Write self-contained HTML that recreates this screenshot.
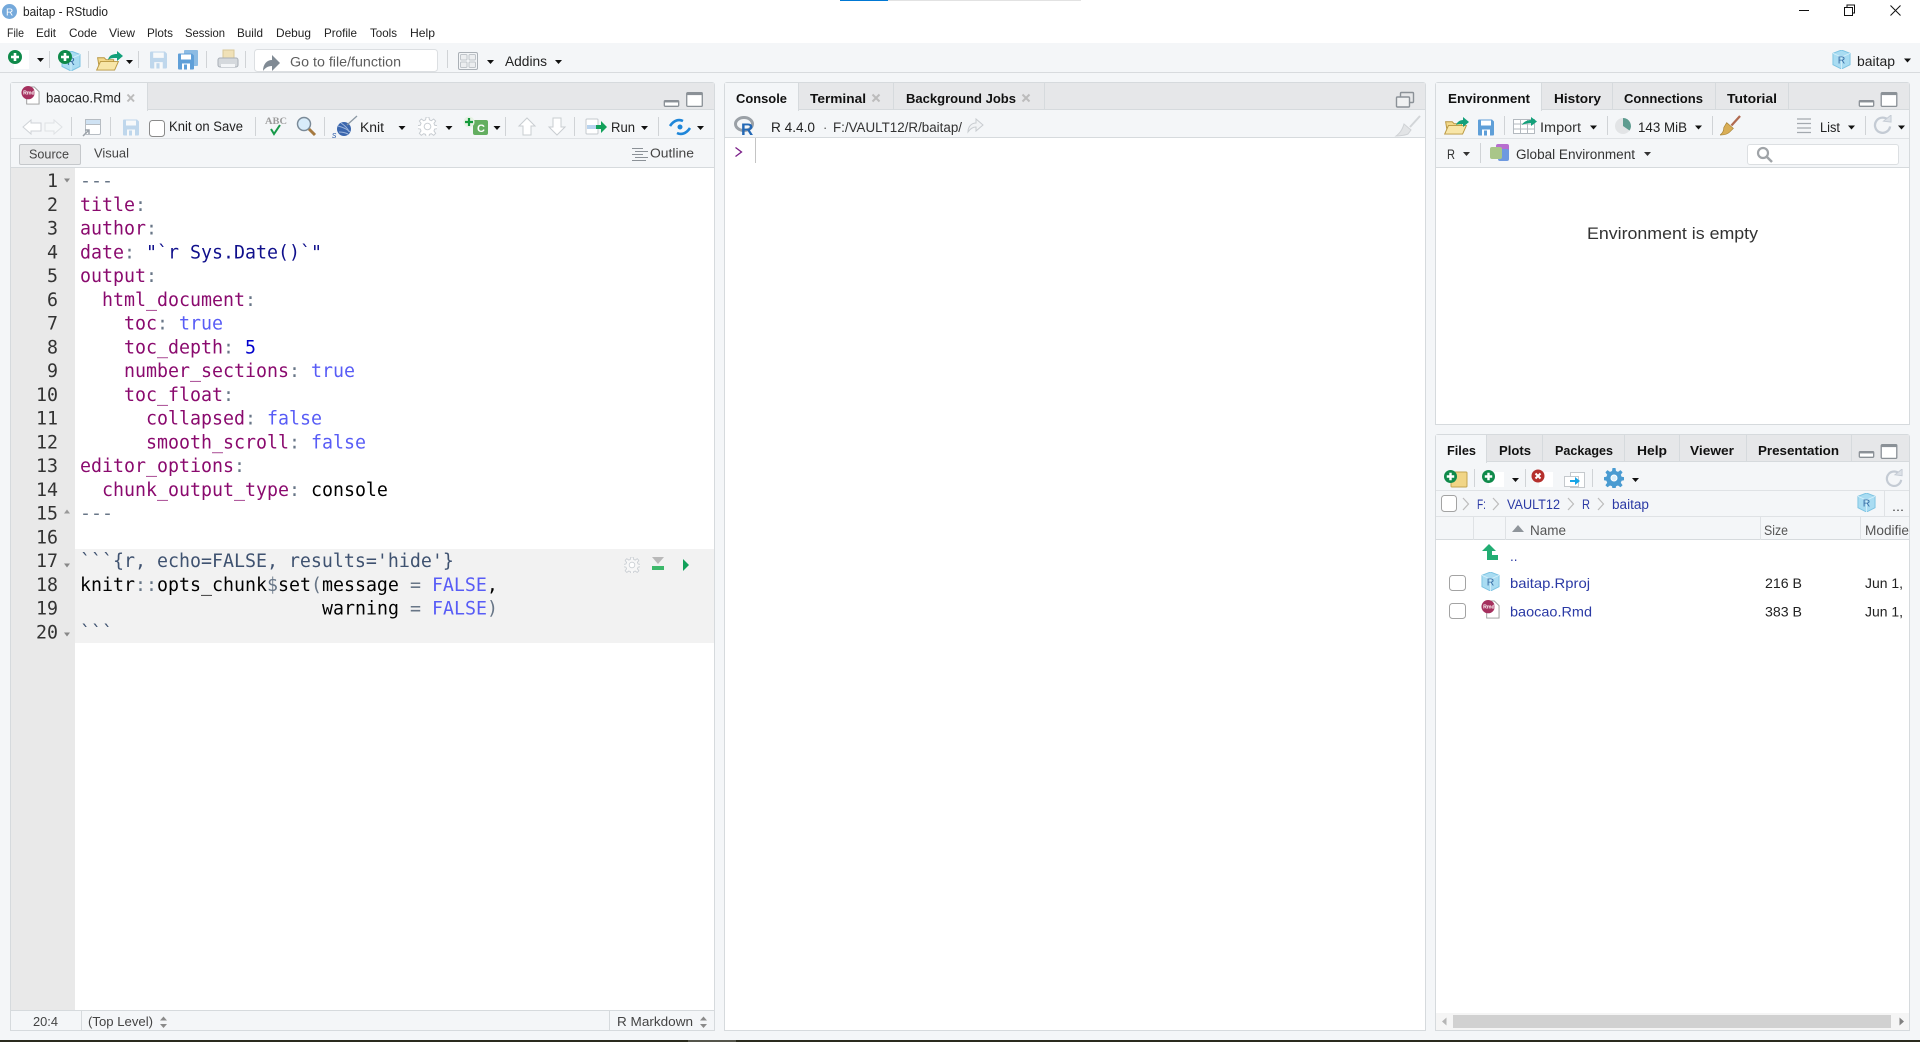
<!DOCTYPE html>
<html><head><meta charset="utf-8"><title>baitap - RStudio</title>
<style>
html,body{margin:0;padding:0;width:1920px;height:1042px;overflow:hidden;background:#f4f6f8}
.a{position:absolute;box-sizing:border-box}
svg{position:absolute;left:0;top:0}
text{font-family:"Liberation Sans",sans-serif;font-size:13px;fill:#222}
.b{font-weight:bold;fill:#111;font-size:13px}
.l{fill:#2b3aa5}
.m{font-family:"DejaVu Sans Mono",monospace;font-size:18.27px;white-space:pre}
.n{fill:#333;text-anchor:end}
.k{fill:#8a0a6e}.p{fill:#687687}.s{fill:#10108c}.t{fill:#585cf6}.d{fill:#0000cd}.h{fill:#3f5270}.x{fill:#000}
</style></head>
<body>
<div class="a" style="left:0;top:0;width:1920px;height:43px;background:#fff"></div>
<div class="a" style="left:840px;top:0;width:241px;height:1px;background:#e2e2e2"></div>
<div class="a" style="left:840px;top:0;width:48px;height:1px;background:#0078d4"></div>
<div class="a" style="left:0;top:72px;width:1920px;height:1px;background:#d8dbde"></div>
<!-- panes -->
<div class="a" style="left:10px;top:82px;width:705px;height:949px;background:#fff;border:1px solid #d6dadd;border-radius:3px 3px 0 0"></div>
<div class="a" style="left:11px;top:83px;width:703px;height:27px;background:#e6e7e9;border-bottom:1px solid #d6dadd"></div>
<div class="a" style="left:11px;top:110px;width:703px;height:58px;background:#f4f6f8;border-bottom:1px solid #d6dadd"></div>
<div class="a" style="left:11px;top:138px;width:703px;height:1px;background:#dfe2e5"></div>
<div class="a" style="left:11px;top:83px;width:137px;height:28px;background:#f4f6f8;border-right:1px solid #d6dadd"></div>
<div class="a" style="left:11px;top:168px;width:64px;height:842px;background:#e9e9e9"></div>
<div class="a" style="left:75px;top:549px;width:639px;height:94px;background:#f2f2f2"></div>
<div class="a" style="left:11px;top:1010px;width:703px;height:20px;background:#f4f6f8;border-top:1px solid #d6dadd"></div>
<div class="a" style="left:81px;top:1010px;width:1px;height:20px;background:#d6dadd"></div>
<div class="a" style="left:609px;top:1010px;width:1px;height:20px;background:#d6dadd"></div>
<div class="a" style="left:19px;top:144px;width:62px;height:21px;background:#e8e9ea;border:1px solid #c5c8cb;border-radius:2px"></div>

<div class="a" style="left:724px;top:82px;width:702px;height:949px;background:#fff;border:1px solid #d6dadd;border-radius:3px 3px 0 0"></div>
<div class="a" style="left:725px;top:83px;width:700px;height:27px;background:#e6e7e9;border-bottom:1px solid #d6dadd"></div>
<div class="a" style="left:725px;top:110px;width:700px;height:28px;background:#f4f6f8;border-bottom:1px solid #d6dadd"></div>
<div class="a" style="left:725px;top:83px;width:74px;height:28px;background:#f4f6f8;border-right:1px solid #d6dadd"></div>
<div class="a" style="left:893px;top:83px;width:1px;height:27px;background:#d6dadd"></div>
<div class="a" style="left:1044px;top:83px;width:1px;height:27px;background:#d6dadd"></div>
<div class="a" style="left:755px;top:138px;width:1px;height:25px;background:#c4c4c4"></div>

<div class="a" style="left:1435px;top:82px;width:475px;height:343px;background:#fff;border:1px solid #d6dadd;border-radius:3px 3px 0 0"></div>
<div class="a" style="left:1436px;top:83px;width:473px;height:27px;background:#e6e7e9;border-bottom:1px solid #d6dadd"></div>
<div class="a" style="left:1436px;top:110px;width:473px;height:58px;background:#f4f6f8;border-bottom:1px solid #d6dadd"></div>
<div class="a" style="left:1436px;top:138px;width:473px;height:1px;background:#dfe2e5"></div>
<div class="a" style="left:1436px;top:83px;width:106px;height:28px;background:#f4f6f8;border-right:1px solid #d6dadd"></div>
<div class="a" style="left:1612px;top:83px;width:1px;height:27px;background:#d6dadd"></div>
<div class="a" style="left:1715px;top:83px;width:1px;height:27px;background:#d6dadd"></div>
<div class="a" style="left:1788px;top:83px;width:1px;height:27px;background:#d6dadd"></div>
<div class="a" style="left:1747px;top:144px;width:152px;height:21px;background:#fff;border:1px solid #dcdfe2;border-radius:3px"></div>

<div class="a" style="left:1435px;top:434px;width:475px;height:597px;background:#fff;border:1px solid #d6dadd;border-radius:3px 3px 0 0"></div>
<div class="a" style="left:1436px;top:435px;width:473px;height:27px;background:#e6e7e9;border-bottom:1px solid #d6dadd"></div>
<div class="a" style="left:1436px;top:462px;width:473px;height:78px;background:#f4f6f8;border-bottom:1px solid #d6dadd"></div>
<div class="a" style="left:1436px;top:490px;width:473px;height:1px;background:#dfe2e5"></div>
<div class="a" style="left:1436px;top:516px;width:473px;height:1px;background:#dfe2e5"></div>
<div class="a" style="left:1436px;top:435px;width:51px;height:28px;background:#f4f6f8;border-right:1px solid #d6dadd"></div>
<div class="a" style="left:1542px;top:435px;width:1px;height:27px;background:#d6dadd"></div>
<div class="a" style="left:1624px;top:435px;width:1px;height:27px;background:#d6dadd"></div>
<div class="a" style="left:1679px;top:435px;width:1px;height:27px;background:#d6dadd"></div>
<div class="a" style="left:1746px;top:435px;width:1px;height:27px;background:#d6dadd"></div>
<div class="a" style="left:1851px;top:435px;width:1px;height:27px;background:#d6dadd"></div>
<div class="a" style="left:1473px;top:517px;width:1px;height:23px;background:#dfe2e5"></div>
<div class="a" style="left:1505px;top:517px;width:1px;height:23px;background:#dfe2e5"></div>
<div class="a" style="left:1760px;top:517px;width:1px;height:23px;background:#dfe2e5"></div>
<div class="a" style="left:1860px;top:517px;width:1px;height:23px;background:#dfe2e5"></div>
<div class="a" style="left:1884px;top:491px;width:1px;height:25px;background:#dfe2e5"></div>
<div class="a" style="left:1436px;top:1013px;width:473px;height:17px;background:#f5f5f5"></div>
<div class="a" style="left:1453px;top:1015px;width:438px;height:13px;background:#d1d1d1"></div>
<div class="a" style="left:0;top:1040px;width:1920px;height:2px;background:#2a2b1e"></div>
<div class="a" style="left:688px;top:1040px;width:48px;height:2px;background:#55564c"></div>

<svg width="1920" height="1042" viewBox="0 0 1920 1042" xmlns="http://www.w3.org/2000/svg">
<defs>
<symbol id="save" viewBox="0 0 16 16"><path d="M0 1a1 1 0 0 1 1-1h13l2 2v13a1 1 0 0 1-1 1H1a1 1 0 0 1-1-1z" fill="#5f9fd8"/><rect x="3" y="1" width="10" height="5" fill="#fff"/><rect x="4" y="10" width="8" height="6" fill="#fff"/><rect x="6" y="11" width="3" height="5" fill="#5f9fd8"/></symbol>
<symbol id="cube" viewBox="0 0 20 20"><path d="M10 0l9 3.500v12l-9 4.500-9-4.500v-12z" fill="#a9dcf2" stroke="#7cc3e2"/><path d="M1 3.500l9 4 9-4M10 7.500V20" fill="none" stroke="#d3eefa"/><text x="6" y="14" style="font-size:11px;fill:#3a6ea5">R</text></symbol>
<symbol id="rmd" viewBox="0 0 20 20"><path d="M6 1h8l5 5v13H6z" fill="#fff" stroke="#9a9a9a"/><circle cx="7.500" cy="7" r="7" fill="#a5305e"/><text x="2.200" y="9" style="font-size:5.500px;fill:#fff;font-weight:bold">Rmd</text></symbol>
<symbol id="gear" viewBox="0 0 20 20"><path d="M8.500 0h3l.5 3 2 .9 2.500-1.800 2.100 2.100-1.800 2.500.8 2 2.900.5v3l-2.900.5-.8 2 1.800 2.500-2.100 2.100-2.500-1.800-2 .8-.5 2.900h-3l-.5-2.900-2-.8-2.500 1.800-2.100-2.100 1.800-2.500-.8-2-2.900-.5v-3l2.900-.5.8-2-1.800-2.500 2.100-2.100 2.500 1.800 2-.9z"/><circle cx="10" cy="10" r="3.500" fill="#fff"/></symbol>
<symbol id="folder" viewBox="0 0 24 18"><path d="M1 4h7l2 2h8v10H3z" fill="#f3d98b" stroke="#b8963f"/><path d="M0 17L4 8h19l-4 9z" fill="#f8e6a8" stroke="#b8963f"/></symbol>
<symbol id="refresh" viewBox="0 0 20 20"><path d="M16.500 6A8 8 0 1 0 18 12" fill="none" stroke="#c4cbd4" stroke-width="2.400"/><path d="M11 6.500l8 1V0z" fill="#dce1e7" stroke="#c4cbd4"/></symbol>
<symbol id="minp" viewBox="0 0 18 8"><rect x=".8" y=".8" width="16.400" height="6.400" rx="1" fill="#fff" stroke="#8b9197" stroke-width="1.500"/><rect x=".8" y=".8" width="16.400" height="2" fill="#8b9197"/></symbol>
<symbol id="maxp" viewBox="0 0 18 16"><rect x=".7" y=".7" width="16.600" height="14.600" rx="1" fill="#fff" stroke="#8b9197" stroke-width="1.400"/><rect x=".7" y=".7" width="16.600" height="2.600" fill="#8b9197"/></symbol>
<symbol id="plus" viewBox="0 0 14 14"><circle cx="7" cy="7" r="7" fill="#0f8a4a"/><path d="M7 3v8M3 7h8" stroke="#fff" stroke-width="2.600"/></symbol>
<symbol id="broom" viewBox="0 0 22 22"><path d="M21 1L12 11" stroke="#b06a50" stroke-width="2.400"/><path d="M7 8l7 6-4 4c-2 2-6 3-10 3 3-2 4-5 4-8z" fill="#d9ae55" stroke="#a58238" stroke-width=".7"/></symbol>
</defs>

<!-- title bar -->
<circle cx="9.500" cy="11.500" r="7.500" fill="#75a9db"/><text x="6" y="15.500" style="font-size:10px;fill:#fff">R</text>
<text x="23" y="16" textLength="85" lengthAdjust="spacingAndGlyphs" style="font-size:12.500px">baitap - RStudio</text>
<path d="M1799 10.500h10" stroke="#111" fill="none"/>
<path d="M1844.500 7.500h8v8h-8zM1847 7.500v-2.500h7.500v8h-2" stroke="#111" fill="none"/>
<path d="M1890.500 5.500l10 10M1900.500 5.500l-10 10" stroke="#111" fill="none"/>
<g style="font-size:12px">
<text x="7" y="37" textLength="17" lengthAdjust="spacingAndGlyphs" style="font-size:12px">File</text>
<text x="36" y="37" textLength="20" lengthAdjust="spacingAndGlyphs" style="font-size:12px">Edit</text>
<text x="69" y="37" textLength="28" lengthAdjust="spacingAndGlyphs" style="font-size:12px">Code</text>
<text x="109" y="37" textLength="26" lengthAdjust="spacingAndGlyphs" style="font-size:12px">View</text>
<text x="147" y="37" textLength="26" lengthAdjust="spacingAndGlyphs" style="font-size:12px">Plots</text>
<text x="185" y="37" textLength="40" lengthAdjust="spacingAndGlyphs" style="font-size:12px">Session</text>
<text x="237" y="37" textLength="26" lengthAdjust="spacingAndGlyphs" style="font-size:12px">Build</text>
<text x="276" y="37" textLength="35" lengthAdjust="spacingAndGlyphs" style="font-size:12px">Debug</text>
<text x="324" y="37" textLength="33" lengthAdjust="spacingAndGlyphs" style="font-size:12px">Profile</text>
<text x="370" y="37" textLength="27" lengthAdjust="spacingAndGlyphs" style="font-size:12px">Tools</text>
<text x="410" y="37" textLength="25" lengthAdjust="spacingAndGlyphs" style="font-size:12px">Help</text>
</g>

<!-- main toolbar -->
<rect x="14" y="50" width="15" height="19" fill="#fff"/>
<use href="#plus" x="8" y="50" width="14" height="14"/>
<path d="M37 58h7l-3.500 4z" fill="#111"/>
<path d="M49.500 51v17M88.500 51v17M138.500 51v17M206.500 51v17M245.500 51v17M447.500 50v18" stroke="#d0d3d6" fill="none"/>
<use href="#cube" x="61" y="51" width="20" height="20"/>
<use href="#plus" x="58" y="50" width="14" height="14"/>
<use href="#folder" x="96" y="54" width="24" height="17"/>
<path d="M108 60c1-5 5-6 9-6v-3l6 5-6 5v-3c-4 0-7 0-9 2z" fill="#13a07a"/>
<path d="M126 60h7l-3.500 4z" fill="#111"/>
<use href="#save" x="150" y="51" width="17" height="18" opacity=".35"/>
<rect x="184" y="50" width="14" height="16" rx="1" fill="#8cbbe3"/>
<use href="#save" x="178" y="53" width="16" height="17"/>
<rect x="223" y="50" width="11" height="9" fill="#f0dfb0" stroke="#d6c48f" opacity=".9"/>
<rect x="218" y="58" width="20" height="9" rx="2" fill="#d5d9dd" stroke="#a9afb6"/>
<rect x="221" y="64" width="14" height="3" fill="#f4f6f8"/>
<rect x="254.500" y="49.500" width="183" height="22" rx="3" fill="#fff" stroke="#dcdfe2"/>
<path d="M263 71c0-7 4-11 9-11v-5l8 8-8 8v-5c-4 0-7 2-9 5z" fill="#808a94"/>
<text x="290" y="66.500" textLength="111" lengthAdjust="spacingAndGlyphs" style="fill:#5c5c5c;font-size:13.500px">Go to file/function</text>
<rect x="458.500" y="52.500" width="19" height="17" rx="1.500" fill="#f4f6f8" stroke="#aab0b6"/>
<rect x="460.500" y="54.500" width="6.500" height="5.500" rx="1" fill="#eceef0" stroke="#c0c5ca"/>
<rect x="469" y="54.500" width="6.500" height="5.500" rx="1" fill="#eceef0" stroke="#c0c5ca"/>
<rect x="460.500" y="62" width="6.500" height="5.500" rx="1" fill="#eceef0" stroke="#c0c5ca"/>
<rect x="469" y="62" width="6.500" height="5.500" rx="1" fill="#eceef0" stroke="#c0c5ca"/>
<path d="M487 60h7l-3.500 4z" fill="#111"/>
<text x="505" y="66" textLength="42" lengthAdjust="spacingAndGlyphs" style="font-size:13.500px">Addins</text>
<path d="M555 60h7l-3.500 4z" fill="#111"/>
<use href="#cube" x="1832" y="50" width="19" height="19"/>
<text x="1857" y="66" textLength="38" lengthAdjust="spacingAndGlyphs" style="font-size:13.500px">baitap</text>
<path d="M1904 58.500h7l-3.500 4z" fill="#111"/>

<!-- editor tab -->
<use href="#rmd" x="21" y="86" width="19" height="19"/>
<text x="46" y="102.500" textLength="75" lengthAdjust="spacingAndGlyphs" style="font-size:13.500px">baocao.Rmd</text>
<path d="M127.500 94.500l6.500 7M134 94.500l-6.500 7" stroke="#bcbcbc" stroke-width="2"/>
<use href="#minp" x="663" y="100" width="17" height="7"/>
<use href="#maxp" x="686" y="92" width="17" height="15"/>

<!-- editor toolbar -->
<path d="M23 127l8-7v3h10v8h-10v3z" fill="#fff" stroke="#cfd3d7"/>
<path d="M62 127l-8-7v3h-9v8h9v3z" fill="#f6f8f9" stroke="#dfe2e5"/>
<path d="M71.500 117v19M110.500 117v19M255.500 117v19M324.500 117v19M505.500 117v19M574.500 117v19M658.500 117v19" stroke="#d0d3d6" fill="none"/>
<rect x="85.500" y="119.500" width="15" height="15" rx="1.500" fill="#fff" stroke="#b7bdc3"/>
<rect x="85.500" y="119.500" width="15" height="5" fill="#cfe2f3" stroke="#b7bdc3"/>
<path d="M83 136l6-6M89 134v-4h-4" stroke="#9aa1a8" fill="none" stroke-width="1.500"/>
<use href="#save" x="123" y="119" width="16" height="17" opacity=".35"/>
<rect x="149.500" y="120.500" width="15" height="16" rx="3" fill="#fff" stroke="#8a8a8a"/>
<text x="169" y="131" textLength="74" lengthAdjust="spacingAndGlyphs" style="font-size:13.500px">Knit on Save</text>
<text x="265" y="124" textLength="22" lengthAdjust="spacingAndGlyphs" style="font-size:9px;font-family:'Liberation Serif',serif;font-weight:bold;fill:#9c9c9c">ABC</text>
<path d="M271 129l3 5 6-9" fill="none" stroke="#189a4a" stroke-width="2"/>
<circle cx="304" cy="124" r="6.500" fill="#d8ecfa" stroke="#7a8a98" stroke-width="1.500"/>
<path d="M309 129l6 6" stroke="#a5793f" stroke-width="3"/>
<circle cx="344" cy="129" r="7" fill="#3a66ad"/>
<path d="M338 126c4 1 9 3 12 6M339 132c3 0 7 1 9 2M341 123c3 2 7 5 8 9" stroke="#9db6dd" fill="none"/>
<path d="M347 125l10-9" stroke="#8a97a3" stroke-width="1.300"/>
<text x="332" y="138" style="font-size:9px;font-style:italic;fill:#3a66ad">s</text>
<text x="360" y="132" textLength="24" lengthAdjust="spacingAndGlyphs" style="font-size:13.500px">Knit</text>
<path d="M398.500 126h7l-3.500 4z" fill="#111"/>
<use href="#gear" x="418" y="117" width="19" height="19" stroke="#c7ccd1" fill="#fff"/>
<path d="M445.500 126h7l-3.500 4z" fill="#111"/>
<rect x="473" y="120" width="15" height="15" rx="2" fill="#63ae60"/>
<text x="477" y="132" style="font-size:11px;fill:#fff;font-weight:bold">C</text>
<circle cx="469" cy="122" r="5.500" fill="#e6f2e4"/>
<path d="M469 118v8M465 122h8" stroke="#139a3b" stroke-width="2.200"/>
<path d="M493.500 126h7l-3.500 4z" fill="#111"/>
<path d="M527 118l8 8h-4v9h-8v-9h-4z" fill="#fff" stroke="#c9cdd1"/>
<path d="M557 135l8-8h-4v-9h-8v9h-4z" fill="#fff" stroke="#c9cdd1"/>
<rect x="586" y="119" width="12" height="15" rx="1" fill="#fff" stroke="#c4c9ce"/>
<rect x="587" y="125" width="10" height="4" fill="#b8d3ee"/>
<path d="M596 125h5v-4l6 6-6 6v-4h-5z" fill="#12a15a"/>
<text x="611" y="132" textLength="24" lengthAdjust="spacingAndGlyphs" style="font-size:13.500px">Run</text>
<path d="M641 126h7l-3.500 4z" fill="#111"/>
<path d="M670 126c4-6 9-7 13-5M690 128c-4 6-9 7-13 5" fill="none" stroke="#1f86d9" stroke-width="2.600"/>
<circle cx="680" cy="127" r="2.500" fill="#1f86d9"/>
<path d="M697 126h7l-3.500 4z" fill="#111"/>
<text x="29" y="158.500" textLength="40" lengthAdjust="spacingAndGlyphs" style="font-size:13px;fill:#444">Source</text>
<text x="94" y="157.500" textLength="35" lengthAdjust="spacingAndGlyphs" style="font-size:13px;fill:#444">Visual</text>
<path d="M632 148.500h11M635 151.500h13M632 154.500h11M635 157.500h13M632 160.500h14" stroke="#8b9197" fill="none"/>
<text x="650" y="157.500" textLength="44" lengthAdjust="spacingAndGlyphs" style="font-size:13px;fill:#444">Outline</text>

<!-- gutter and code -->
<g transform="translate(0,-0.5)">
<text class="m n" x="58" y="187.500">1</text><text class="m n" x="58" y="211.300">2</text><text class="m n" x="58" y="235">3</text><text class="m n" x="58" y="258.800">4</text><text class="m n" x="58" y="282.500">5</text><text class="m n" x="58" y="306.300">6</text><text class="m n" x="58" y="330">7</text><text class="m n" x="58" y="353.800">8</text><text class="m n" x="58" y="377.500">9</text><text class="m n" x="58" y="401.300">10</text><text class="m n" x="58" y="425">11</text><text class="m n" x="58" y="448.800">12</text><text class="m n" x="58" y="472.500">13</text><text class="m n" x="58" y="496.300">14</text><text class="m n" x="58" y="520">15</text><text class="m n" x="58" y="543.800">16</text><text class="m n" x="58" y="567.500">17</text><text class="m n" x="58" y="591.300">18</text><text class="m n" x="58" y="615">19</text><text class="m n" x="58" y="638.800">20</text>
<path d="M64 179h6l-3 4zM64 564h6l-3 4zM64 633h6l-3 4z" fill="#888"/>
<path d="M64 514h6l-3-4z" fill="#999"/>
<text class="m p" x="80" y="187.500">---</text>
<text class="m" x="80" y="211.300"><tspan class="k">title</tspan><tspan class="p">:</tspan></text>
<text class="m" x="80" y="235"><tspan class="k">author</tspan><tspan class="p">:</tspan></text>
<text class="m" x="80" y="258.800"><tspan class="k">date</tspan><tspan class="p">: </tspan><tspan class="s">"&#96;r Sys.Date()&#96;"</tspan></text>
<text class="m" x="80" y="282.500"><tspan class="k">output</tspan><tspan class="p">:</tspan></text>
<text class="m" x="102" y="306.300"><tspan class="k">html_document</tspan><tspan class="p">:</tspan></text>
<text class="m" x="124" y="330"><tspan class="k">toc</tspan><tspan class="p">: </tspan><tspan class="t">true</tspan></text>
<text class="m" x="124" y="353.800"><tspan class="k">toc_depth</tspan><tspan class="p">: </tspan><tspan class="d">5</tspan></text>
<text class="m" x="124" y="377.500"><tspan class="k">number_sections</tspan><tspan class="p">: </tspan><tspan class="t">true</tspan></text>
<text class="m" x="124" y="401.300"><tspan class="k">toc_float</tspan><tspan class="p">:</tspan></text>
<text class="m" x="146" y="425"><tspan class="k">collapsed</tspan><tspan class="p">: </tspan><tspan class="t">false</tspan></text>
<text class="m" x="146" y="448.800"><tspan class="k">smooth_scroll</tspan><tspan class="p">: </tspan><tspan class="t">false</tspan></text>
<text class="m" x="80" y="472.500"><tspan class="k">editor_options</tspan><tspan class="p">:</tspan></text>
<text class="m" x="102" y="496.300"><tspan class="k">chunk_output_type</tspan><tspan class="p">: </tspan><tspan class="x">console</tspan></text>
<text class="m p" x="80" y="520">---</text>
<text class="m h" x="80" y="567.500">&#96;&#96;&#96;{r, echo=FALSE, results='hide'}</text>
<text class="m" x="80" y="591.300"><tspan class="x">knitr</tspan><tspan class="p">::</tspan><tspan class="x">opts_chunk</tspan><tspan class="p">$</tspan><tspan class="x">set</tspan><tspan class="p">(</tspan><tspan class="x">message </tspan><tspan class="p">= </tspan><tspan class="t">FALSE</tspan><tspan class="x">,</tspan></text>
<text class="m" x="322" y="615"><tspan class="x">warning </tspan><tspan class="p">= </tspan><tspan class="t">FALSE</tspan><tspan class="p">)</tspan></text>
<text class="m h" x="80" y="638.800">&#96;&#96;&#96;</text>
</g>
<use href="#gear" x="624" y="557" width="16" height="16" stroke="#c7ccd1" fill="#f7f7f7"/>
<path d="M652 557h12l-6 7z" fill="#b9b9b9"/><rect x="652" y="566" width="12" height="4" fill="#3cb86a"/>
<path d="M683 559l6 6-6 6z" fill="#11a05a"/>

<!-- status -->
<text x="33" y="1026" textLength="25" lengthAdjust="spacingAndGlyphs" style="font-size:13px;fill:#444">20:4</text>
<text x="88" y="1026" textLength="65" lengthAdjust="spacingAndGlyphs" style="font-size:13px;fill:#444">(Top Level)</text>
<path d="M160 1020.500h7l-3.500-4zM160 1024h7l-3.500 4z" fill="#8a8a8a"/>
<text x="617" y="1026" textLength="76" lengthAdjust="spacingAndGlyphs" style="font-size:13px;fill:#444">R Markdown</text>
<path d="M700 1020.500h7l-3.500-4zM700 1024h7l-3.500 4z" fill="#8a8a8a"/>

<!-- console -->
<text x="736" y="103" textLength="51" lengthAdjust="spacingAndGlyphs" class="b">Console</text>
<text x="810" y="103" textLength="56" lengthAdjust="spacingAndGlyphs" class="b">Terminal</text>
<path d="M872.500 94.500l7 7M879.500 94.500l-7 7" stroke="#bcbcbc" stroke-width="2"/>
<text x="906" y="103" textLength="110" lengthAdjust="spacingAndGlyphs" class="b">Background Jobs</text>
<path d="M1022.500 94.500l7 7M1029.500 94.500l-7 7" stroke="#bcbcbc" stroke-width="2"/>
<rect x="1400.500" y="92.500" width="13" height="10" rx="1" fill="none" stroke="#8b9197" stroke-width="1.400"/>
<rect x="1396.500" y="97" width="13" height="10" rx="1" fill="#f0f1f2" stroke="#8b9197" stroke-width="1.400"/>
<ellipse cx="744" cy="124" rx="8.500" ry="6.500" fill="none" stroke="#9aa0a6" stroke-width="3"/>
<text x="741" y="135" style="font-size:17px;font-weight:bold;fill:#2368b5">R</text>
<text x="771" y="132" textLength="44" lengthAdjust="spacingAndGlyphs" style="font-size:13.500px">R 4.4.0</text>
<text x="823" y="132" style="font-size:13px;fill:#555">·</text>
<text x="833" y="132" textLength="129" lengthAdjust="spacingAndGlyphs" style="font-size:13.500px;fill:#333">F:/VAULT12/R/baitap/</text>
<path d="M968 132c0-6 4-9 8-9v-4l7 6-7 6v-4c-3 0-6 2-8 5z" fill="#f1f3f5" stroke="#c8ccd0"/>
<path d="M1420 116l-10 11" stroke="#d2d5d8" stroke-width="2"/><path d="M1404 124l7 6-3 4c-2 1-8 2-12 2 3-2 6-5 8-12z" fill="#e2e4e6" stroke="#cfd2d5"/>
<path d="M735.500 147.500l6 4.500-6 4.500" fill="none" stroke="#7a1e88" stroke-width="1.300"/>

<!-- environment -->
<text x="1448" y="103" textLength="82" lengthAdjust="spacingAndGlyphs" class="b">Environment</text>
<text x="1554" y="103" textLength="47" lengthAdjust="spacingAndGlyphs" class="b">History</text>
<text x="1624" y="103" textLength="79" lengthAdjust="spacingAndGlyphs" class="b">Connections</text>
<text x="1727" y="103" textLength="50" lengthAdjust="spacingAndGlyphs" class="b">Tutorial</text>
<use href="#minp" x="1858" y="100" width="17" height="7"/>
<use href="#maxp" x="1880" y="92" width="18" height="15"/>
<use href="#folder" x="1444" y="118" width="24" height="17"/>
<path d="M1456 125c1-3 4-5 7-5v-3l6 5-6 5v-3c-3 0-5 0-7 1z" fill="#13a07a"/>
<use href="#save" x="1478" y="119" width="16" height="17"/>
<path d="M1504.500 116v19M1607.500 116v19M1712.500 116v19M1865.500 116v19" stroke="#d0d3d6" fill="none"/>
<rect x="1513.500" y="119.500" width="21" height="14" fill="#fff" stroke="#b3b9bf"/>
<path d="M1513.500 124h21M1513.500 129h21M1520.500 119.500v14M1527.500 119.500v14" stroke="#b3b9bf"/>
<path d="M1522 125c1-3 5-5 9-5v-3l6 4.500-6 4.500v-3c-4 0-7 1-9 2z" fill="#13a07a"/>
<text x="1540" y="132" textLength="41" lengthAdjust="spacingAndGlyphs" style="font-size:13.500px;fill:#333">Import</text>
<path d="M1590 125.500h7l-3.500 4z" fill="#111"/>
<circle cx="1623" cy="126" r="8" fill="#e2e4e6"/><path d="M1623 126v-8a8 8 0 0 1 6.500 12.500z" fill="#5e9c90"/>
<text x="1638" y="132" textLength="49" lengthAdjust="spacingAndGlyphs" style="font-size:13.500px">143 MiB</text>
<path d="M1695 125.500h7l-3.500 4z" fill="#111"/>
<use href="#broom" x="1720" y="115" width="21" height="21"/>
<path d="M1797 119h14M1797 123.500h14M1797 128h14M1797 132.500h14" stroke="#a3a9af" stroke-width="1.200" fill="none"/>
<text x="1820" y="132" textLength="20" lengthAdjust="spacingAndGlyphs" style="font-size:13.500px">List</text>
<path d="M1848 125.500h7l-3.500 4z" fill="#111"/>
<use href="#refresh" x="1873" y="115" width="19" height="19"/>
<path d="M1898 125.500h7l-3.500 4z" fill="#111"/>
<text x="1447" y="159" textLength="8" lengthAdjust="spacingAndGlyphs" style="font-size:13.500px;fill:#333">R</text>
<path d="M1463 152h7l-3.500 4z" fill="#333"/>
<path d="M1480.500 143v20" stroke="#d0d3d6"/>
<rect x="1496" y="144" width="13" height="13" rx="2" fill="#b86ed0"/>
<rect x="1498" y="149" width="11" height="12" rx="2" fill="#6e99e0"/>
<rect x="1490" y="147" width="12" height="12" rx="2" fill="#a9c689"/>
<text x="1516" y="159" textLength="119" lengthAdjust="spacingAndGlyphs" style="font-size:13.500px;fill:#333">Global Environment</text>
<path d="M1644 152h7l-3.500 4z" fill="#333"/>
<circle cx="1763" cy="153" r="5" fill="none" stroke="#a0a4a8" stroke-width="2.200"/>
<path d="M1767 157l5 5" stroke="#a0a4a8" stroke-width="2.500"/>
<text x="1587" y="239" textLength="171" lengthAdjust="spacingAndGlyphs" style="font-size:17px;fill:#333">Environment is empty</text>

<!-- files -->
<text x="1447" y="455" textLength="29" lengthAdjust="spacingAndGlyphs" class="b">Files</text>
<text x="1499" y="455" textLength="32" lengthAdjust="spacingAndGlyphs" class="b">Plots</text>
<text x="1555" y="455" textLength="58" lengthAdjust="spacingAndGlyphs" class="b">Packages</text>
<text x="1637" y="455" textLength="30" lengthAdjust="spacingAndGlyphs" class="b">Help</text>
<text x="1690" y="455" textLength="44" lengthAdjust="spacingAndGlyphs" class="b">Viewer</text>
<text x="1758" y="455" textLength="81" lengthAdjust="spacingAndGlyphs" class="b">Presentation</text>
<use href="#minp" x="1858" y="451" width="17" height="7"/>
<use href="#maxp" x="1880" y="444" width="18" height="15"/>
<rect x="1451" y="472" width="16" height="15" rx="1" fill="#f1d586" stroke="#c2a44f"/>
<use href="#plus" x="1444" y="470" width="13" height="13"/>
<path d="M1474.500 469v18M1525.500 469v18M1592.500 469v18" stroke="#d0d3d6"/>
<rect x="1489" y="472" width="15" height="15" fill="#fff"/>
<use href="#plus" x="1482" y="470" width="13" height="13"/>
<path d="M1512 478h7l-3.500 4z" fill="#111"/>
<rect x="1539" y="472" width="14" height="15" fill="#fff"/>
<circle cx="1538" cy="476" r="6.500" fill="#b5302d"/><path d="M1535.500 473.500l5 5M1540.500 473.500l-5 5" stroke="#fff" stroke-width="2"/>
<rect x="1570.500" y="472.500" width="14" height="15" fill="#fff" stroke="#c5c9cd"/>
<rect x="1564.500" y="476.500" width="14" height="10" fill="#fff" stroke="#c5c9cd"/>
<path d="M1570 480h5v-3l5 4-5 4v-3h-5z" fill="#17a4e6"/>
<use href="#gear" x="1604" y="468" width="20" height="20" fill="#4a9bd1"/>
<circle cx="1614" cy="478" r="2.500" fill="#dbeef9"/>
<path d="M1632 478h7l-3.500 4z" fill="#111"/>
<use href="#refresh" x="1885" y="469" width="18" height="18"/>
<rect x="1441.500" y="495.500" width="15" height="16" rx="3" fill="#fff" stroke="#a3a3a3"/>
<path d="M1463 498l5.500 6-5.500 6M1493 498l5.500 6-5.500 6M1568 498l5.500 6-5.500 6M1598 498l5.500 6-5.500 6" fill="none" stroke="#bcbcbc" stroke-width="1.200"/>
<text x="1477" y="509" textLength="9" lengthAdjust="spacingAndGlyphs" class="l" style="font-size:13.500px">F:</text>
<text x="1507" y="509" textLength="53" lengthAdjust="spacingAndGlyphs" class="l" style="font-size:13.500px">VAULT12</text>
<text x="1582" y="509" textLength="8" lengthAdjust="spacingAndGlyphs" class="l" style="font-size:13.500px">R</text>
<text x="1612" y="509" textLength="37" lengthAdjust="spacingAndGlyphs" class="l" style="font-size:13.500px">baitap</text>
<use href="#cube" x="1857" y="493" width="19" height="19"/>
<text x="1892" y="511" textLength="12" lengthAdjust="spacingAndGlyphs" style="font-size:13px;fill:#444">...</text>
<path d="M1512 532l6-7 6 7z" fill="#8f959b"/>
<text x="1530" y="535" textLength="36" lengthAdjust="spacingAndGlyphs" style="font-size:13.500px;fill:#555">Name</text>
<text x="1764" y="535" textLength="24" lengthAdjust="spacingAndGlyphs" style="font-size:13.500px;fill:#555">Size</text>
<text x="1865" y="535" textLength="44" lengthAdjust="spacingAndGlyphs" style="font-size:13.500px;fill:#555">Modifie</text>
<path d="M1489 544l7 7h-4v4h6v5h-11v-9h-5z" fill="#22ad73"/>
<text x="1510" y="561" class="l" style="font-size:13.500px">..</text>
<rect x="1449.500" y="575.500" width="16" height="15" rx="3" fill="#fff" stroke="#a3a3a3"/>
<rect x="1449.500" y="603.500" width="16" height="15" rx="3" fill="#fff" stroke="#a3a3a3"/>
<use href="#cube" x="1481" y="572" width="19" height="19"/>
<use href="#rmd" x="1481" y="600" width="19" height="19"/>
<text x="1510" y="588" textLength="80" lengthAdjust="spacingAndGlyphs" class="l" style="font-size:14px">baitap.Rproj</text>
<text x="1510" y="616.500" textLength="82" lengthAdjust="spacingAndGlyphs" class="l" style="font-size:14px">baocao.Rmd</text>
<text x="1765" y="588" textLength="37" lengthAdjust="spacingAndGlyphs" style="font-size:13.500px">216 B</text>
<text x="1765" y="616.500" textLength="37" lengthAdjust="spacingAndGlyphs" style="font-size:13.500px">383 B</text>
<text x="1865" y="588" textLength="38" lengthAdjust="spacingAndGlyphs" style="font-size:13.500px">Jun 1,</text>
<text x="1865" y="616.500" textLength="38" lengthAdjust="spacingAndGlyphs" style="font-size:13.500px">Jun 1,</text>
<path d="M1442 1021.500l4.500-4v8z" fill="#b5b5b5"/>
<path d="M1904 1021.500l-4.500-4v8z" fill="#808080"/>
</svg>
</body></html>
